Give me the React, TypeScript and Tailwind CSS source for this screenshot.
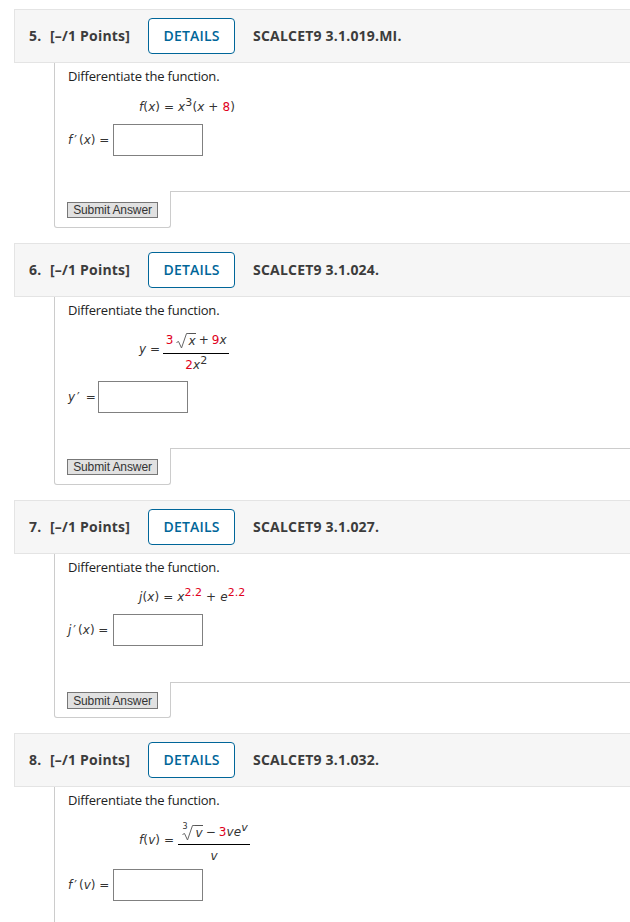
import React from 'react';

const Red: React.FC<{ children: React.ReactNode }> = ({ children }) => <span className="text-[#e0001b]">{children}</span>;
const V: React.FC<{ children: React.ReactNode }> = ({ children }) => <i className="italic">{children}</i>;
const Sup: React.FC<{ children: React.ReactNode }> = ({ children }) => (
  <sup className="relative -top-[5px] align-baseline text-[11px] leading-none">{children}</sup>
);
const Prime = () => <span className="mx-[2px]">′</span>;

const Radical: React.FC<{ index?: string; children: React.ReactNode }> = ({ index, children }) => (
  <span className="relative ml-[2px] inline-flex items-end">
    {index && <span className="absolute left-0 top-[-2px] text-[8px] leading-none">{index}</span>}
    <svg width="13" height="16" viewBox="0 0 13 16" className="shrink-0">
      <path d="M0.5 9.5 L2.5 8.5 L5.5 15 L10.5 0.5 L13 0.5" fill="none" stroke="#666" strokeWidth="1" />
    </svg>
    <span className="border-t border-[#555] leading-[15px]">{children}</span>
  </span>
);

const Answer: React.FC<{ label: React.ReactNode; labelW: string; mt: string }> = ({ label, labelW, mt }) => (
  <div className={`flex items-center ${mt}`}>
    <span className={`font-['DejaVu_Sans',sans-serif] text-[12px] text-[#333] ${labelW}`}>{label}</span>
    <div className="h-[32px] w-[90px] border border-[#808080] bg-white" />
  </div>
);

const Question: React.FC<{
  num: number;
  code: string;
  formula: React.ReactNode;
  answer: React.ReactNode;
  bodyH: string;
  footer?: string;
  button?: string;
  submit?: boolean;
}> = ({ num, code, formula, answer, bodyH, footer = 'h-[37px] pt-[11px]', button = 'h-[16px]', submit = true }) => (
  <section>
    <header className="ml-[14px] flex h-[54px] items-center border border-r-0 border-[#e4e4e4] bg-[#f6f6f6] pb-[2px] pl-[14px] font-['Open_Sans',sans-serif] text-[14px] font-semibold tracking-[0.2px] text-[#3c3c3c]">
      <span className="w-[21px] font-bold">{num}.</span>
      <span className="font-bold">[–/1 Points]</span>
      <button className="ml-[18px] mt-[2px] h-[36px] w-[87px] rounded-[4px] border border-[#006699] bg-white pb-[2px] text-[14px] font-semibold text-[#006699]">
        DETAILS
      </button>
      <span className="ml-[18px] font-bold">{code}</span>
    </header>
    <div className="ml-[54px]">
      <div className={`border-l border-[#cccccc] pl-[13px] pt-[4px] ${bodyH}`}>
        <p className="font-['Open_Sans',sans-serif] text-[13px] leading-[18px] tracking-[-0.2px] text-[#222]">Differentiate the function.</p>
        {formula}
        {answer}
      </div>
      {submit && (
        <div className="flex">
          <div className={`w-[117px] rounded-b-[3px] border border-t-0 border-[#cccccc] pl-[12px] ${footer}`}>
            <button className={`block w-[91px] border border-[#777] bg-[#e1e1e1] font-['Liberation_Sans',sans-serif] text-[12px] leading-[14px] tracking-[-0.1px] text-[#333] ${button}`}>
              Submit Answer
            </button>
          </div>
          <div className="flex-1 border-t border-[#cccccc]" />
        </div>
      )}
    </div>
  </section>
);

const mathCls = "font-['DejaVu_Sans',sans-serif] text-[12px] tracking-[0.1px] text-[#333]";

export default function App() {
  return (
    <main className="h-[922px] w-[630px] overflow-hidden bg-white pt-[9px]">
      <div className="flex flex-col gap-[15px]">
        <Question
          num={5}
          code="SCALCET9 3.1.019.MI."
          bodyH="h-[128px]"
          formula={
            <div className={`${mathCls} mt-[12px] ml-[71px] h-[21px] leading-[21px]`}>
              <V>f</V>(<V>x</V>) = <V>x</V><Sup>3</Sup>(<V>x</V> + <Red>8</Red>)
            </div>
          }
          answer={<Answer mt="mt-[6px]" labelW="w-[45px]" label={<><V>f</V><Prime />(<V>x</V>) =</>} />}
        />
        <Question
          num={6}
          code="SCALCET9 3.1.024."
          bodyH="h-[151px]"
          formula={
            <div className={`${mathCls} mt-[12px] ml-[71px] flex h-[44px] items-center gap-[3px]`}>
              <span className="mb-[9px]"><V>y</V> =</span>
              <span className="inline-flex w-[66px] flex-col items-center">
                <span className="flex h-[23px] w-full items-end justify-center border-b border-black pb-[4px]">
                  <Red>3</Red><Radical><V>x</V></Radical><span className="mx-[3px]">+</span><Red>9</Red><V>x</V>
                </span>
                <span className="h-[21px] pt-[1px] leading-[20px]"><Red>2</Red><V>x</V><Sup>2</Sup></span>
              </span>
            </div>
          }
          answer={<Answer mt="mt-[6px]" labelW="w-[30px]" label={<><V>y</V><Prime /> =</>} />}
        />
        <Question
          num={7}
          code="SCALCET9 3.1.027."
          bodyH="h-[128px]"
          footer="h-[36px] pt-[10px]"
          button="h-[17px]"
          formula={
            <div className={`${mathCls} mt-[11px] ml-[71px] h-[21px] leading-[21px]`}>
              <V>j</V>(<V>x</V>) = <V>x</V><Sup><Red>2.2</Red></Sup> + <V>e</V><Sup><Red>2.2</Red></Sup>
            </div>
          }
          answer={<Answer mt="mt-[6px]" labelW="w-[45px]" label={<><V>j</V><Prime />(<V>x</V>) =</>} />}
        />
        <Question
          num={8}
          code="SCALCET9 3.1.032."
          bodyH="h-[140px]"
          submit={false}
          formula={
            <div className={`${mathCls} mt-[12px] ml-[71px] flex h-[46px] items-center gap-[4px]`}>
              <span className="mb-[9px]"><V>f</V>(<V>v</V>) =</span>
              <span className="inline-flex w-[72px] flex-col items-center">
                <span className="flex h-[24px] w-full items-end justify-center border-b border-black pb-[3px]">
                  <Radical index="3"><V>v</V></Radical>
                  <span className="mx-[3px]">−</span>
                  <span><Red>3</Red><V>v</V><V>e</V><Sup><V>v</V></Sup></span>
                </span>
                <span className="h-[22px] pt-[1px] leading-[20px]"><V>v</V></span>
              </span>
            </div>
          }
          answer={<Answer mt="mt-[2px]" labelW="w-[45px]" label={<><V>f</V><Prime />(<V>v</V>) =</>} />}
        />
      </div>
    </main>
  );
}
